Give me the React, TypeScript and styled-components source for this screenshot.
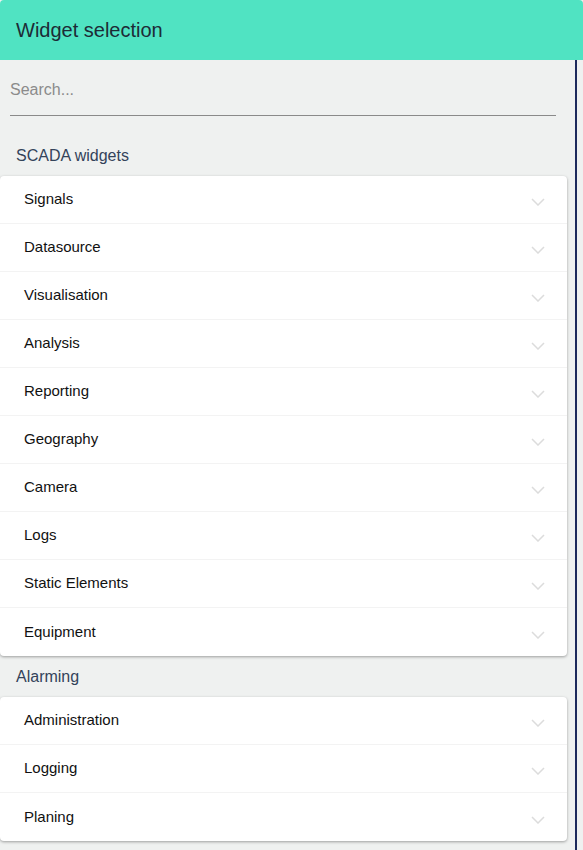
import React from "react";
import styled, { createGlobalStyle } from "styled-components";

const GlobalStyle = createGlobalStyle`
  html, body {
    margin: 0;
    padding: 0;
    background: #eff1f0;
    font-family: "Liberation Sans", Arial, sans-serif;
  }
  * { box-sizing: border-box; }
`;

const Page = styled.div`
  width: 583px;
  height: 850px;
  display: flex;
  flex-direction: column;
  overflow: hidden;
  background: #eff1f0;
`;

const Header = styled.header`
  height: 60px;
  flex: none;
  background: #50e3c2;
  border-radius: 4px 4px 0 0;
  display: flex;
  align-items: center;
  padding-left: 16px;
  font-size: 20px;
  color: #1d2b36;
`;

const Body = styled.div`
  flex: 1;
  display: flex;
  min-height: 0;
`;

const Panel = styled.div`
  width: 575px;
  flex: none;
  display: flex;
  flex-direction: column;
  overflow: hidden;
`;

const Divider = styled.div`
  width: 1.5px;
  flex: none;
  background: #1c2a5c;
`;

const SearchWrap = styled.div`
  padding: 20px 19px 0 10px;
  margin-bottom: 19px;
`;

const SearchInput = styled.input`
  display: block;
  width: 100%;
  border: none;
  border-bottom: 1px solid #8a8a8a;
  background: transparent;
  font-family: inherit;
  font-size: 16px;
  line-height: 20px;
  height: 36px;
  padding: 0 0 15px;
  color: #333;
  outline: none;
  &::placeholder {
    color: #8b8b8b;
  }
`;

const SectionLabel = styled.div`
  padding: 11px 16px 0;
  margin-bottom: 10px;
  font-size: 16px;
  line-height: 20px;
  color: #33435a;
`;

const Card = styled.div`
  width: 567px;
  background: #fff;
  border-radius: 4px;
  box-shadow: 0 1px 3px rgba(0, 0, 0, 0.35);
`;

const Row = styled.div<{ $last?: boolean }>`
  height: 48px;
  display: flex;
  align-items: center;
  justify-content: space-between;
  padding: 0 22px 2px 24px;
  font-size: 15px;
  color: #111;
  border-bottom: ${(p) => (p.$last ? "none" : "1px solid #f3f3f3")};
`;

const Chevron = styled.svg`
  width: 14px;
  height: 8px;
  margin-top: 7px;
  flex: none;
`;

const ChevronIcon = () => (
  <Chevron viewBox="0 0 14 8">
    <path d="M1 1l6 6 6-6" fill="none" stroke="#dcdcdc" strokeWidth="1.5" />
  </Chevron>
);

const sections = [
  {
    title: "SCADA widgets",
    items: [
      "Signals",
      "Datasource",
      "Visualisation",
      "Analysis",
      "Reporting",
      "Geography",
      "Camera",
      "Logs",
      "Static Elements",
      "Equipment",
    ],
  },
  { title: "Alarming", items: ["Administration", "Logging", "Planing"] },
];

export default function App() {
  return (
    <>
      <GlobalStyle />
      <Page>
        <Header>Widget selection</Header>
        <Body>
          <Panel>
            <SearchWrap>
              <SearchInput placeholder="Search..." />
            </SearchWrap>
            {sections.map((s) => (
              <React.Fragment key={s.title}>
                <SectionLabel>{s.title}</SectionLabel>
                <Card>
                  {s.items.map((it, i) => (
                    <Row key={it} $last={i === s.items.length - 1}>
                      <span>{it}</span>
                      <ChevronIcon />
                    </Row>
                  ))}
                </Card>
              </React.Fragment>
            ))}
          </Panel>
          <Divider />
        </Body>
      </Page>
    </>
  );
}
